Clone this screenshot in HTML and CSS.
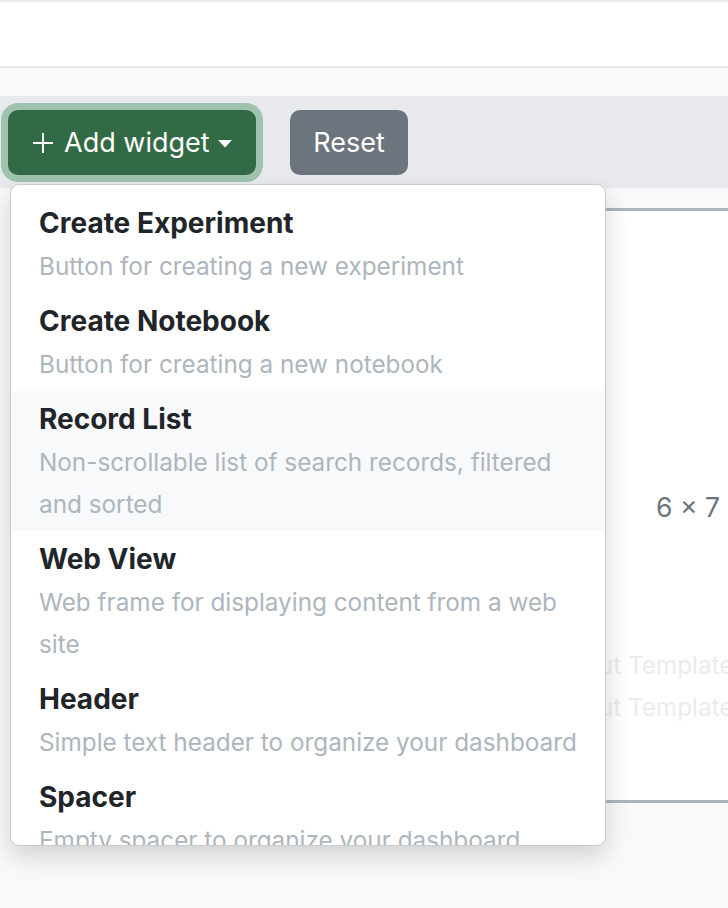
FILE: index.html
```html
<!DOCTYPE html>
<html lang="en">

<head>
    <meta charset="UTF-8">
    <meta name="viewport" content="width=device-width, initial-scale=1.0">
    <title>Dashboard</title>
    <link rel="stylesheet" href="styles.css">
</head>

<body>
    <nav class="navbar"></nav>
    <div class="subbar"></div>

    <div class="toolbar">
        <div class="dropdown">
            <button class="btn btn--green btn--focus" type="button">
                <svg class="btn__plus" width="22" height="22" viewBox="0 0 22 22" fill="none" stroke="#fff" stroke-width="2">
                    <path d="M11 1v20M1 11h20" />
                </svg>
                <span>Add widget</span>
                <svg class="btn__caret" width="14" height="8" viewBox="0 0 14 8" fill="#fff">
                    <path d="M0 0h14L7 7.5z" />
                </svg>
            </button>

            <ul class="menu">
                <li class="menu__item">
                    <div class="menu__title">Create Experiment</div>
                    <div class="menu__text">Button for creating a new experiment</div>
                </li>
                <li class="menu__item">
                    <div class="menu__title">Create Notebook</div>
                    <div class="menu__text">Button for creating a new notebook</div>
                </li>
                <li class="menu__item menu__item--hover">
                    <div class="menu__title">Record List</div>
                    <div class="menu__text">Non-scrollable list of search records, filtered and sorted</div>
                </li>
                <li class="menu__item">
                    <div class="menu__title">Web View</div>
                    <div class="menu__text">Web frame for displaying content from a web site</div>
                </li>
                <li class="menu__item">
                    <div class="menu__title">Header</div>
                    <div class="menu__text">Simple text header to organize your dashboard</div>
                </li>
                <li class="menu__item">
                    <div class="menu__title">Spacer</div>
                    <div class="menu__text">Empty spacer to organize your dashboard</div>
                </li>
            </ul>
        </div>

        <button class="btn btn--gray" type="button">Reset</button>
    </div>

    <div class="grid">
        <div class="widget">
            <div class="widget__size">6 × 7</div>
            <div class="widget__ghost">
                <div>Layout Template</div>
                <div>Layout Template</div>
            </div>
        </div>
    </div>
</body>

</html>
```

FILE: styles.css
```css
body {
    font-family: Inter, "Noto Sans", sans-serif;
    margin: 0;
    background: #f8f9fa;
    overflow: hidden;
    height: 908px;
}

*,
::after,
::before {
    box-sizing: border-box;
}

ul {
    margin: 0;
    padding: 0;
    list-style: none;
}

.navbar {
    height: 68px;
    background: #fff;
    border-top: 2px solid #e9eaed;
    border-bottom: 2px solid #e9eaed;
}

.subbar {
    height: 28px;
}

.toolbar {
    display: flex;
    align-items: flex-start;
    gap: 34px;
    height: 92px;
    padding: 14px 8px;
    background: #e9eaee;
}

.dropdown {
    position: relative;
}

.btn {
    display: flex;
    align-items: center;
    height: 65px;
    padding: 0 22px;
    border: 0;
    border-radius: 10px;
    color: #fff;
    font-family: Inter, sans-serif;
    font-size: 27px;
    cursor: pointer;
}

.btn--green {
    gap: 10px;
    width: 248px;
    padding-left: 24px;
    background: #326a45;
}

.btn--focus {
    box-shadow: 0 0 0 7px #9fc3af;
}

.btn--gray {
    width: 118px;
    justify-content: center;
    background: #6c757d;
}

.btn__caret {
    margin-top: 2px;
    margin-left: -2px;
}

.menu {
    position: absolute;
    top: 74px;
    left: 2px;
    z-index: 10;
    width: 596px;
    height: 662px;
    overflow: hidden;
    padding-top: 10px;
    background: #fff;
    border: 1px solid rgba(0, 0, 0, .2);
    border-radius: 9px;
    box-shadow: 0 10px 24px rgba(0, 0, 0, .16);
}

.menu__item {
    padding: 6px 22px 6px 28px;
}

.menu__item--hover {
    background: #f8f9fa;
}

.menu__title {
    font-size: 28px;
    font-weight: 700;
    line-height: 44px;
    color: #212529;
}

.menu__text {
    font-size: 24.3px;
    line-height: 42px;
    color: #adb5bd;
}

.grid {
    padding-top: 20px;
}

.widget {
    width: 616px;
    height: 595px;
    margin-left: 380px;
    padding-top: 275px;
    background: #fff;
    border-top: 3px solid #adb5bd;
    border-bottom: 3px solid #adb5bd;
}

.widget__size {
    text-align: center;
    font-size: 26.5px;
    line-height: 42px;
    color: #6c757d;
}

.widget__ghost {
    margin-top: 116px;
    padding-left: 164px;
    font-size: 24.3px;
    line-height: 42px;
    color: #e9ecef;
}
```
